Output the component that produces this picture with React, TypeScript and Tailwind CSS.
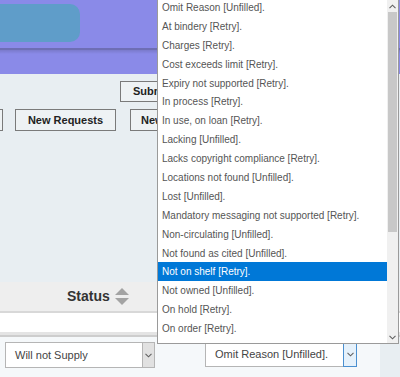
import React from "react";

const items = [
  "Omit Reason [Unfilled].",
  "At bindery [Retry].",
  "Charges [Retry].",
  "Cost exceeds limit [Retry].",
  "Expiry not supported [Retry].",
  "In process [Retry].",
  "In use, on loan [Retry].",
  "Lacking [Unfilled].",
  "Lacks copyright compliance [Retry].",
  "Locations not found [Unfilled].",
  "Lost [Unfilled].",
  "Mandatory messaging not supported [Retry].",
  "Non-circulating [Unfilled].",
  "Not found as cited [Unfilled].",
  "Not on shelf [Retry].",
  "Not owned [Unfilled].",
  "On hold [Retry].",
  "On order [Retry].",
  "Owner error [Retry].",
];

function Chevron({ up = false, className = "" }: { up?: boolean; className?: string }) {
  return (
    <svg width="7" height="5" viewBox="0 0 7 5" className={className}>
      <path
        d={up ? "M0.5 4.2 L3.5 1.2 L6.5 4.2" : "M0.5 0.8 L3.5 3.8 L6.5 0.8"}
        fill="none"
        stroke="#606060"
        strokeWidth="1.1"
      />
    </svg>
  );
}

function SortIcon() {
  return (
    <svg width="14" height="17" viewBox="0 0 14 17">
      <path d="M7 0 L14 7 L0 7 Z" fill="#a3a3a3" />
      <path d="M0 10 L14 10 L7 17 Z" fill="#a3a3a3" />
    </svg>
  );
}

export default function App() {
  return (
    <div
      className="relative w-[400px] h-[377px] overflow-hidden bg-[#e8eef2]"
      style={{ fontFamily: '"Liberation Sans", Arial, sans-serif' }}
    >
      {/* header */}
      <div className="h-[74px] bg-[#8a8ae8] flex flex-col">
        <div className="mt-[4px] -ml-[20px] w-[100px] h-[38px] rounded-[10px] bg-[#5f9dc9]" />
        <div className="mt-[6px] h-[2px] bg-[#6e6eb4]" />
        <div className="h-[4px] bg-gradient-to-b from-[#7a7acb] to-[#8a8ae8]" />
      </div>

      {/* toolbar */}
      <div className="pt-[7px] flex flex-col gap-[7px]">
        <div className="flex">
          <button className="ml-[120px] h-[21px] w-[90px] border border-[#7a7a7a] bg-[#eef2f4] text-[11px] font-bold text-[#222] text-left pl-[12px]">
            Submit
          </button>
        </div>
        <div className="flex h-[22px] -ml-[98px]">
          <button className="w-[101px] border border-[#7a7a7a] bg-[#eef2f4] text-[11px] font-bold text-[#222]">
            Pending
          </button>
          <button className="ml-[12px] w-[101px] border border-[#7a7a7a] bg-[#eef2f4] text-[11px] font-bold text-[#222]">
            New Requests
          </button>
          <button className="ml-[14px] w-[101px] border border-[#7a7a7a] bg-[#eef2f4] text-[11px] font-bold text-[#222] text-left pl-[10px]">
            New
          </button>
        </div>
      </div>

      {/* table */}
      <div className="mt-[151px]">
        <div className="h-[31px] bg-[#eeeeee] border-b-[2px] border-[#d8d8d8] flex items-center pl-[67px] gap-[5px]">
          <span className="text-[14px] font-bold text-[#333]">Status</span>
          <SortIcon />
        </div>
        <div className="h-[19px] bg-white" />
        <div className="h-[3px] bg-[#e4e4e4]" />
        <div className="h-[2px] bg-[#cdcdcd]" />
        <div className="flex h-[40px]">
          <div className="w-[380px] bg-[#f5f8fa] flex items-start pt-[5px] pl-[5px]">
            <div className="w-[150px] h-[26px] border border-[#b5b5b5] bg-white flex">
              <div className="flex-1 text-[11px] text-[#444] pl-[9px] flex items-center">Will not Supply</div>
              <div className="w-[12px] border-l border-[#b5b5b5] bg-[#e1e1e1] flex items-center justify-center">
                <Chevron />
              </div>
            </div>
            <div className="ml-[50px] w-[152px] h-[25px] border border-[#b5b5b5] bg-white flex">
              <div className="flex-1 text-[11px] text-[#444] pl-[9px] flex items-center">Omit Reason [Unfilled].</div>
              <div className="w-[14px] border border-[#4a8fd0] -my-px -mr-px bg-[#e5f1fb] flex items-center justify-center">
                <Chevron />
              </div>
            </div>
          </div>
          <div className="flex-1 bg-[#e8eef2]" />
        </div>
      </div>

      {/* open dropdown list */}
      <div className="absolute left-[157px] top-0 w-[242px] h-[344px] bg-white border-l border-b border-r border-[#9a9a9a] flex overflow-hidden">
        <div className="flex-1 overflow-hidden">
          <div className="-mt-[2px] flex flex-col">
            {items.map((t) => (
              <div
                key={t}
                className={
                  "h-[18.9px] shrink-0 flex items-center pl-[4px] text-[10px] whitespace-nowrap " +
                  (t === "Not on shelf [Retry]."
                    ? "bg-[#0078d7] text-white"
                    : "text-[#555]")
                }
              >
                {t}
              </div>
            ))}
          </div>
        </div>
        <div className="w-[11px] bg-[#f0f0f0] flex flex-col items-center">
          <div className="h-[12px] flex items-center justify-center">
            <Chevron up />
          </div>
          <div className="w-[9px] h-[220px] bg-[#c8c8c8]" />
          <div className="flex-1" />
          <div className="h-[12px] flex items-center justify-center">
            <Chevron />
          </div>
        </div>
      </div>
    </div>
  );
}
